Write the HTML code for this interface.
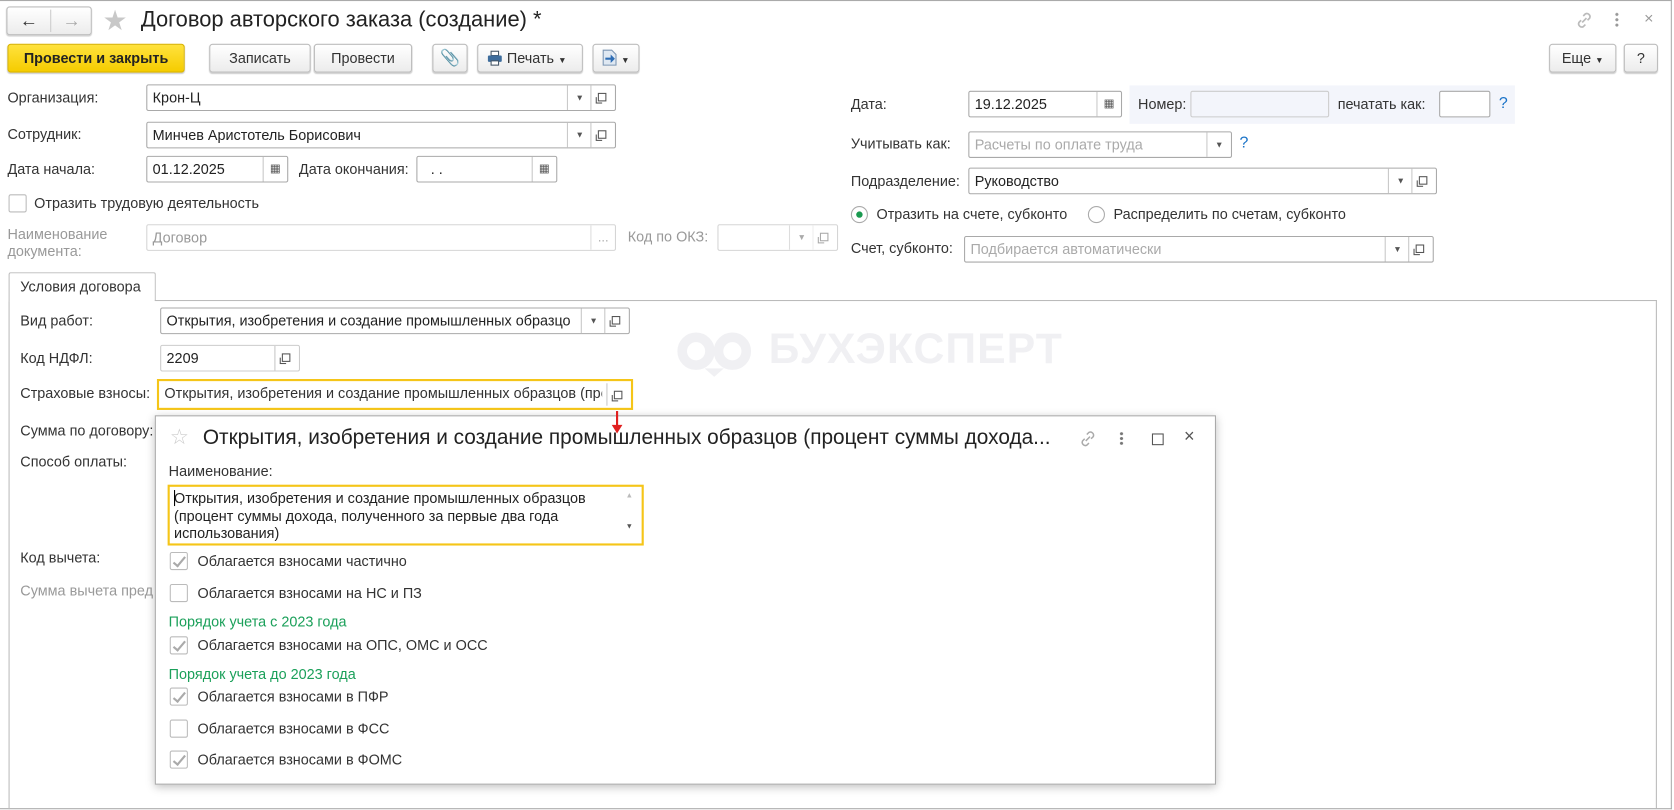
<!DOCTYPE html>
<html><head><meta charset="utf-8"><style>
html,body{margin:0;padding:0;background:#fff;overflow:hidden;width:1674px;height:810px}
#s{position:absolute;left:0;top:0;width:1568px;height:759px;transform:scale(1.06760);transform-origin:0 0;font-family:"Liberation Sans",Arial,sans-serif;font-size:13.5px;color:#333}
.a{position:absolute;white-space:nowrap}
.l{position:absolute;white-space:nowrap;line-height:16px}
.btn{position:absolute;height:27px;box-sizing:border-box;border:1px solid #bdbdbd;border-radius:3px;background:linear-gradient(#fff,#ececec);box-shadow:0 1px 1px rgba(0,0,0,.2);text-align:center;line-height:25px;color:#333;font-size:13.5px}
.f{position:absolute;height:25px;box-sizing:border-box;border:1px solid #a9a9a9;border-radius:2px;background:#fff;line-height:23px;padding-left:5px;color:#222;overflow:hidden;white-space:nowrap}
.dd{position:absolute;top:0;bottom:0;width:22px;border-left:1px solid #c8c8c8;text-align:center;font-size:8px;color:#555}
.cp{position:absolute;top:0;bottom:0;width:22px;border-left:1px solid #c8c8c8}
.cp:after{content:"";position:absolute;left:6px;top:7px;width:6px;height:6px;border:1px solid #555;box-shadow:-2px 2px 0 -1px #fff,-3px 3px 0 -1px #555}
.cb{position:absolute;width:17px;height:17px;box-sizing:border-box;border:1px solid #bbb;border-radius:2px;background:#fff}
.ck:after{content:"";position:absolute;left:5px;top:1px;width:4px;height:10px;border:solid #aaa;border-width:0 2px 2px 0;transform:rotate(40deg)}
.g{color:#999}
.gr{color:#1ba05a}
</style></head><body><div id="s">
<div class="a" style="left:0;top:0;width:1566px;height:758px;border-top:1px solid #aaa;border-right:1px solid #aaa;border-bottom:1px solid #aaa;box-sizing:border-box"></div>

<div class="btn" style="left:6px;top:6px;width:80px;height:27px"><span class="a" style="left:0;width:40px;top:0;font-size:17px;font-weight:bold;color:#333">&#8592;</span><span class="a" style="left:40px;top:2px;bottom:2px;border-left:1px solid #ccc"></span><span class="a" style="left:40px;width:40px;top:0;font-size:17px;font-weight:bold;color:#aaa">&#8594;</span></div>
<div class="a" style="left:96px;top:4px;font-size:26px;color:#c8c8c8">&#9733;</div>
<div class="a" style="left:132px;top:7px;font-size:20.5px;color:#222">Договор авторского заказа (создание) *</div>
<svg class="a" style="left:1474px;top:9px" width="20" height="20" viewBox="0 0 20 20"><g fill="none" stroke="#bbb" stroke-width="1.6"><path d="M9 6l2-2a3 3 0 014 4l-2 2M11 14l-2 2a3 3 0 01-4-4l2-2M8 12l4-4"/></g></svg>
<div class="a" style="left:1513px;top:11px;width:3px;height:15px;background:radial-gradient(circle,#999 1.3px,transparent 1.6px) 0 0/3px 5px"></div>
<div class="a" style="left:1540px;top:9px;font-size:15px;color:#999">&#215;</div>

<div class="btn" style="left:7px;top:41px;width:166px;background:linear-gradient(#ffe23d,#f5cc00);border-color:#d9b400;font-weight:bold;color:#222">Провести и закрыть</div>
<div class="btn" style="left:196px;top:41px;width:95px">Записать</div>
<div class="btn" style="left:294px;top:41px;width:92px">Провести</div>
<div class="btn" style="left:405px;top:41px;width:33px;color:#888;font-size:15px">&#128206;</div>
<div class="btn" style="left:447px;top:41px;width:99px;text-align:left;padding-left:8px"><svg style="vertical-align:-3px" width="15" height="15" viewBox="0 0 15 15"><rect x="4" y="1" width="7" height="4" fill="#fff" stroke="#456" /><rect x="1" y="5" width="13" height="6" rx="1" fill="#3d6c9c"/><rect x="4" y="10" width="7" height="4" fill="#fff" stroke="#456"/></svg> Печать <span style="font-size:8px">&#9660;</span></div>
<div class="btn" style="left:555px;top:41px;width:44px;text-align:left;padding-left:8px"><svg style="vertical-align:-3px" width="14" height="16" viewBox="0 0 14 16"><path d="M1 1h8l4 4v10H1z" fill="#dfe8f2" stroke="#7b95b3"/><path d="M3 8h5V5l4 4-4 4v-3H3z" fill="#2d6db5"/></svg> <span style="font-size:8px">&#9660;</span></div>
<div class="btn" style="left:1451px;top:41px;width:63px">Еще <span style="font-size:8px">&#9660;</span></div>
<div class="btn" style="left:1521px;top:41px;width:32px">?</div>

<div class="l" style="left:7px;top:84px">Организация:</div>
<div class="f" style="left:137px;top:79px;width:440px">Крон-Ц<div class="dd" style="right:22px">&#9660;</div><div class="cp" style="right:0"></div></div>
<div class="l" style="left:7px;top:118px">Сотрудник:</div>
<div class="f" style="left:137px;top:114px;width:440px">Минчев Аристотель Борисович<div class="dd" style="right:22px">&#9660;</div><div class="cp" style="right:0"></div></div>
<div class="l" style="left:7px;top:151px">Дата начала:</div>
<div class="f" style="left:137px;top:146px;width:133px">01.12.2025<div class="dd" style="right:0;font-size:11px">&#9638;</div></div>
<div class="l" style="left:280px;top:151px">Дата окончания:</div>
<div class="f" style="left:390px;top:146px;width:132px">&nbsp;&nbsp;. .<div class="dd" style="right:0;font-size:11px">&#9638;</div></div>
<div class="cb" style="left:8px;top:182px"></div>
<div class="l" style="left:32px;top:183px">Отразить трудовую деятельность</div>
<div class="l g" style="left:7px;top:212px">Наименование<br>документа:</div>
<div class="f g" style="left:137px;top:210px;width:440px;border-color:#d5d5d5">Договор<div class="dd" style="right:0;border-color:#ddd;font-size:12px;color:#aaa">...</div></div>
<div class="l g" style="left:588px;top:214px">Код по ОКЗ:</div>
<div class="f" style="left:672px;top:210px;width:113px;border-color:#d5d5d5"><div class="dd" style="right:22px;border-color:#ddd;color:#aaa">&#9660;</div><div class="cp" style="right:0;border-color:#ddd;opacity:.5"></div></div>

<div class="l" style="left:797px;top:90px">Дата:</div>
<div class="f" style="left:907px;top:85px;width:144px">19.12.2025<div class="dd" style="right:0;font-size:11px">&#9638;</div></div>
<div class="a" style="left:1058px;top:80px;width:361px;height:36px;background:#f3f5fb"></div>
<div class="l" style="left:1066px;top:90px">Номер:</div>
<div class="f" style="left:1115px;top:85px;width:130px;border-color:#ccc;background:#f3f5fb"></div>
<div class="l" style="left:1253px;top:90px">печатать как:</div>
<div class="f" style="left:1348px;top:85px;width:48px"></div>
<div class="l" style="left:1404px;top:89px;color:#1a73c8;font-size:15px">?</div>
<div class="l" style="left:797px;top:127px">Учитывать как:</div>
<div class="f" style="left:907px;top:123px;width:247px;color:#aaa">Расчеты по оплате труда<div class="dd" style="right:0">&#9660;</div></div>
<div class="l" style="left:1161px;top:126px;color:#1a73c8;font-size:15px">?</div>
<div class="l" style="left:797px;top:162px">Подразделение:</div>
<div class="f" style="left:907px;top:157px;width:439px">Руководство<div class="dd" style="right:22px">&#9660;</div><div class="cp" style="right:0"></div></div>
<div class="a" style="left:797px;top:193px;width:16px;height:16px;border:1px solid #aaa;border-radius:50%;box-sizing:border-box"><div class="a" style="left:4px;top:4px;width:6px;height:6px;border-radius:50%;background:#1a9a50"></div></div>
<div class="l" style="left:821px;top:193px">Отразить на счете, субконто</div>
<div class="a" style="left:1019px;top:193px;width:16px;height:16px;border:1px solid #aaa;border-radius:50%;box-sizing:border-box"></div>
<div class="l" style="left:1043px;top:193px">Распределить по счетам, субконто</div>
<div class="l" style="left:797px;top:225px">Счет, субконто:</div>
<div class="f" style="left:903px;top:221px;width:440px;color:#aaa">Подбирается автоматически<div class="dd" style="right:22px">&#9660;</div><div class="cp" style="right:0"></div></div>

<div class="a" style="left:8px;top:255px;width:138px;height:27px;border:1px solid #bbb;border-bottom:none;border-radius:2px 2px 0 0;box-sizing:border-box;background:#fff"></div>
<div class="l" style="left:19px;top:261px">Условия договора</div>
<div class="a" style="left:145px;top:281px;width:1407px;border-top:1px solid #bbb"></div>
<div class="a" style="left:1551px;top:281px;height:476px;border-left:1px solid #bbb"></div>
<div class="a" style="left:8px;top:282px;height:476px;border-left:1px solid #bbb"></div>

<svg class="a" style="left:630px;top:305px" width="80" height="48" viewBox="0 0 80 48"><g fill="none" stroke="#f0f0f3" stroke-width="9"><circle cx="22" cy="24" r="13"/><circle cx="56" cy="24" r="13"/></g><path d="M30 40l9 8 9-8z" fill="#f0f0f3"/></svg>
<div class="a" style="left:720px;top:305px;font-size:40px;font-weight:bold;color:#f0f0f3;letter-spacing:1px">БУХЭКСПЕРТ</div>

<div class="l" style="left:19px;top:293px">Вид работ:</div>
<div class="f" style="left:150px;top:288px;width:440px;border-color:#aaa">Открытия, изобретения и создание промышленных образцо<div class="dd" style="right:22px">&#9660;</div><div class="cp" style="right:0"></div></div>
<div class="l" style="left:19px;top:328px">Код НДФЛ:</div>
<div class="f" style="left:150px;top:323px;width:131px;border-color:#ccc">2209<div class="cp" style="right:0"></div></div>
<div class="l" style="left:19px;top:361px">Страховые взносы:</div>
<div class="a" style="left:147px;top:355px;width:446px;height:29px;border:2px solid #f5c518;box-sizing:border-box"></div>
<div class="l" style="left:154px;top:361px;width:410px;overflow:hidden">Открытия, изобретения и создание промышленных образцов (процент</div>
<div class="cp" style="left:568px;top:359px;height:21px;bottom:auto;position:absolute"></div>
<div class="l" style="left:19px;top:396px">Сумма по договору:</div>
<div class="l" style="left:19px;top:425px">Способ оплаты:</div>
<div class="l" style="left:19px;top:515px">Код вычета:</div>
<div class="l g" style="left:19px;top:546px">Сумма вычета пред</div>

<div class="a" style="left:145px;top:389px;width:994px;height:346px;background:#fff;border:1px solid #aaa;box-sizing:border-box;box-shadow:0 2px 8px rgba(0,0,0,.25)"></div>
<div class="a" style="left:577px;top:385px;width:2px;height:14px;background:#e02020"></div>
<div class="a" style="left:573px;top:398px;border-left:5px solid transparent;border-right:5px solid transparent;border-top:8px solid #e02020"></div>
<div class="a" style="left:159px;top:397px;font-size:20px;color:#ccc">&#9734;</div>
<div class="a" style="left:190px;top:399px;font-size:19.5px;color:#222">Открытия, изобретения и создание промышленных образцов (процент суммы дохода...</div>
<svg class="a" style="left:1009px;top:401px" width="20" height="20" viewBox="0 0 20 20"><g fill="none" stroke="#aaa" stroke-width="1.4"><path d="M9 6l2-2a3 3 0 014 4l-2 2M11 14l-2 2a3 3 0 01-4-4l2-2M8 12l4-4"/></g></svg>
<div class="a" style="left:1049px;top:404px;width:3px;height:13px;background:radial-gradient(circle,#777 1.3px,transparent 1.6px) 0 0/3px 4.5px"></div>
<div class="a" style="left:1079px;top:406px;width:9px;height:9px;border:1px solid #555"></div>
<div class="a" style="left:1109px;top:399px;font-size:17px;color:#555">&#215;</div>
<div class="l" style="left:158px;top:434px">Наименование:</div>
<div class="a" style="left:157px;top:454px;width:446px;height:57px;border:2px solid #f5c518;box-sizing:border-box"></div>
<div class="l" style="left:163px;top:459px;line-height:16.5px;color:#222">Открытия, изобретения и создание промышленных образцов<br>(процент суммы дохода, полученного за первые два года<br>использования)</div>
<div class="a" style="left:163px;top:459px;width:1px;height:15px;background:#000"></div>
<div class="a" style="left:586px;top:461px;font-size:7px;color:#bbb">&#9650;</div>
<div class="a" style="left:586px;top:490px;font-size:7px;color:#555">&#9660;</div>

<div class="cb ck" style="left:159px;top:517px"></div><div class="l" style="left:185px;top:518px">Облагается взносами частично</div>
<div class="cb" style="left:159px;top:547px"></div><div class="l" style="left:185px;top:548px">Облагается взносами на НС и ПЗ</div>
<div class="l gr" style="left:158px;top:575px">Порядок учета с 2023 года</div>
<div class="cb ck" style="left:159px;top:596px"></div><div class="l" style="left:185px;top:597px">Облагается взносами на ОПС, ОМС и ОСС</div>
<div class="l gr" style="left:158px;top:624px">Порядок учета до 2023 года</div>
<div class="cb ck" style="left:159px;top:644px"></div><div class="l" style="left:185px;top:645px">Облагается взносами в ПФР</div>
<div class="cb" style="left:159px;top:674px"></div><div class="l" style="left:185px;top:675px">Облагается взносами в ФСС</div>
<div class="cb ck" style="left:159px;top:703px"></div><div class="l" style="left:185px;top:704px">Облагается взносами в ФОМС</div>
</div></body></html>
